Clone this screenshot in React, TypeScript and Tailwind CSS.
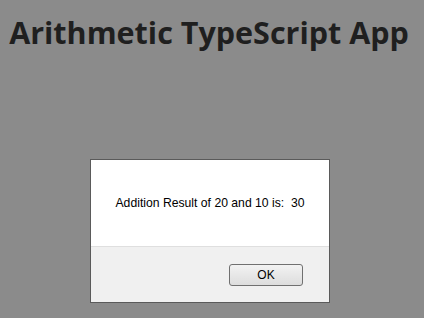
export default function App() {
  return (
    <div className="h-[318px] w-[424px] overflow-hidden bg-[#8b8b8b] flex flex-col items-center">
      <h1 className="mt-[10px] ml-[-6px] text-[30.5px] leading-[44px] font-bold text-[#1f1f1f] font-['Open_Sans',sans-serif] whitespace-nowrap">
        Arithmetic TypeScript App
      </h1>
      <div className="mt-[105px] ml-[-4px] w-[240px] h-[144px] border border-[#5a5a5a] bg-white flex flex-col font-['Liberation_Sans',Arial,sans-serif]">
        <div className="h-[86px] flex items-center justify-center text-[12.2px] text-black">
          Addition Result of 20 and 10 is:&nbsp; 30
        </div>
        <div className="flex-1 bg-[#f0f0f0] border-t border-[#dfdfdf] flex items-center justify-end pr-[26px]">
          <button className="w-[74px] h-[22px] rounded-[3px] border border-[#707070] bg-gradient-to-b from-[#f2f2f2] to-[#dddddd] text-[12px] text-black">
            OK
          </button>
        </div>
      </div>
    </div>
  );
}
